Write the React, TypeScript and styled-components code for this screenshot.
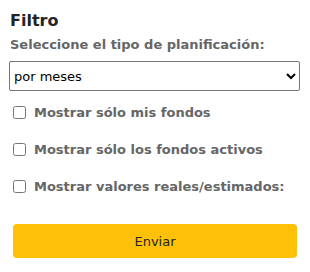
import { FC } from 'react'
import styled, { createGlobalStyle } from 'styled-components'

const GlobalStyle = createGlobalStyle`
  html, body {
    margin: 0;
    padding: 0;
    background: #fff;
    font-family: 'DejaVu Sans', sans-serif;
  }
`

const FilterPanel = styled.form`
  width: 310px;
  height: 272px;
  box-sizing: border-box;
  padding: 11px 10px 0 9px;
  display: flex;
  flex-direction: column;
`

const Title = styled.h3`
  margin: 0 0 0 1px;
  font-size: 16px;
  line-height: 20px;
  font-weight: bold;
  color: #212529;
`

const FieldLabel = styled.label`
  margin: 5px 0 0 1px;
  font-size: 13px;
  line-height: 18px;
  font-weight: bold;
  color: #666;
`

const Select = styled.select`
  margin-top: 7px;
  width: 291px;
  height: 30px;
  box-sizing: border-box;
  padding: 0;
  font-family: 'DejaVu Sans', sans-serif;
  font-size: 13px;
  color: #000;
  background: #fff;
  border: 1px solid #767676;
  border-radius: 2px;
`

const OptionList = styled.div`
  display: flex;
  flex-direction: column;
  gap: 19px;
  margin-top: 12px;
  padding-left: 4px;
`

const CheckRow = styled.label`
  display: flex;
  align-items: center;
  gap: 8px;
  height: 18px;
  font-size: 13px;
  font-weight: bold;
  color: #666;
`

const Checkbox = styled.input`
  margin: 0;
  width: 13px;
  height: 13px;
`

const SubmitButton = styled.button`
  margin: 29px 0 0 4px;
  width: 284px;
  height: 34px;
  border: none;
  border-radius: 4px;
  background: #ffc107;
  color: #212529;
  font-family: 'DejaVu Sans', sans-serif;
  font-size: 13px;
`

const options = [
  'Mostrar sólo mis fondos',
  'Mostrar sólo los fondos activos',
  'Mostrar valores reales/estimados:',
]

const App: FC = () => {
  return (
    <>
      <GlobalStyle />
      <FilterPanel onSubmit={(e) => e.preventDefault()}>
        <Title>Filtro</Title>
        <FieldLabel htmlFor="tipo">Seleccione el tipo de planificación:</FieldLabel>
        <Select id="tipo" defaultValue="meses">
          <option value="meses">por meses</option>
          <option value="anios">por años</option>
        </Select>
        <OptionList>
          {options.map((text) => (
            <CheckRow key={text}>
              <Checkbox type="checkbox" />
              {text}
            </CheckRow>
          ))}
        </OptionList>
        <SubmitButton type="submit">Enviar</SubmitButton>
      </FilterPanel>
    </>
  )
}

export default App
